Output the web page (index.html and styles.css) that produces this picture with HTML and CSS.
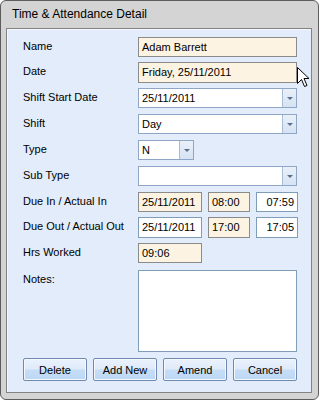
FILE: index.html
```html
<!DOCTYPE html>
<html lang="en">
<head>
  <meta charset="UTF-8" />
  <title>Time &amp; Attendance Detail</title>
  <link rel="stylesheet" href="styles.css">
</head>
<body>

  <div class="window">
    <div class="titlebar">Time &amp; Attendance Detail</div>

    <div class="client">
      <div class="row h20">
        <label>Name</label>
        <div class="box ro wide">Adam Barrett</div>
      </div>
      <div class="row h21">
        <label>Date</label>
        <div class="box ro wide">Friday, 25/11/2011</div>
      </div>
      <div class="row h21">
        <label>Shift Start Date</label>
        <div class="combo wide"><span>25/11/2011</span><i class="drop"></i></div>
      </div>
      <div class="row h21">
        <label>Shift</label>
        <div class="combo wide"><span>Day</span><i class="drop"></i></div>
      </div>
      <div class="row h21">
        <label>Type</label>
        <div class="combo small"><span>N</span><i class="drop"></i></div>
      </div>
      <div class="row h21">
        <label>Sub Type</label>
        <div class="combo wide"><span></span><i class="drop"></i></div>
      </div>
      <div class="row h20">
        <label>Due In / Actual In</label>
        <div class="trio">
          <div class="box ro date">25/11/2011</div>
          <div class="box ro time">08:00</div>
          <div class="box time right">07:59</div>
        </div>
      </div>
      <div class="row h21">
        <label>Due Out / Actual Out</label>
        <div class="trio">
          <div class="box date">25/11/2011</div>
          <div class="box ro time">17:00</div>
          <div class="box time right">17:05</div>
        </div>
      </div>
      <div class="row h22">
        <label>Hrs Worked</label>
        <div class="box ro date hrs">09:06</div>
      </div>
      <div class="row notes">
        <label>Notes:</label>
        <div class="box memo wide"></div>
      </div>

      <div class="buttons">
        <button class="btn">Delete</button>
        <button class="btn">Add New</button>
        <button class="btn">Amend</button>
        <button class="btn">Cancel</button>
      </div>
    </div>
  </div>

  <!-- mouse pointer over the date field -->
  <svg class="cursor" width="13" height="21" viewBox="0 0 13 21">
    <path d="M0.5 0.5 L0.5 16.5 L4.5 12.5 L7.5 19.5 L10 18.5 L7 11.5 L12 11.5 Z" fill="#fff" stroke="#000" stroke-width="1" stroke-linejoin="miter"/>
  </svg>

</body>
</html>
```

FILE: styles.css
```css
body {
  margin: 0;
  width: 319px;
  height: 400px;
  background: #ffffff;
  font-family: 'Liberation Sans', Arial, sans-serif;
  font-size: 11px;
  color: #000;
  position: relative;
  overflow: hidden;
}

.window {
  box-sizing: border-box;
  width: 319px;
  height: 400px;
  border: 1px solid #5c5c5c;
  border-radius: 6px;
  background: #d4d4d4;
  padding: 0 6px 6px 5px;
  display: flex;
  flex-direction: column;
}

.titlebar {
  height: 27px;
  line-height: 27px;
  padding-left: 6px;
  font-size: 12px;
  color: #000;
}

.client {
  flex: 1;
  border: 1px solid #838383;
  background: #e2ecfa;
  box-shadow: inset 1px 1px 0 #f4f8fd;
  padding: 8px 13px 0 16px;
  display: flex;
  flex-direction: column;
  gap: 5px;
}

.row {
  display: flex;
  align-items: flex-start;
}

.row label {
  width: 115px;
  line-height: 18px;
  flex-shrink: 0;
}

.h20 { height: 20px; }
.h21 { height: 21px; }
.h22 { height: 22px; }

.box {
  box-sizing: border-box;
  height: 20px;
  border: 1px solid #7f9db9;
  background: #fff;
  padding: 0 3px;
  line-height: 18px;
  white-space: nowrap;
}

.h21 .box { height: 21px; line-height: 19px; }

.box.ro {
  background: #fcf3e3;
  border-color: #8b8b8b;
}

.wide { width: 159px; }

.combo {
  box-sizing: border-box;
  height: 20px;
  border: 1px solid #8fa6c6;
  background: #fff;
  display: flex;
}

.combo span {
  flex: 1;
  padding: 0 3px;
  line-height: 18px;
}

.combo.small { width: 56px; }

.drop {
  width: 13px;
  border-left: 1px solid #a9bcd6;
  background: linear-gradient(#e9f0f9, #d6e3f3);
  position: relative;
}

.drop::after {
  content: "";
  position: absolute;
  left: 4px;
  top: 8px;
  border-left: 3px solid transparent;
  border-right: 3px solid transparent;
  border-top: 3px solid #5a6f8c;
}

.trio {
  display: flex;
  gap: 6px;
}

.date { width: 64px; }
.time { width: 42px; }
.box.right { text-align: right; }

.notes { height: 82px; }

.memo {
  height: 82px;
  border-color: #7f9db9;
}

.buttons {
  margin-top: 1px;
  display: flex;
  gap: 6px;
}

.btn {
  box-sizing: border-box;
  width: 64px;
  height: 23px;
  padding: 0;
  border: 1px solid #7089b0;
  border-radius: 2px;
  background: linear-gradient(#eaf2fc 0%, #dfeafa 48%, #c6ddf6 52%, #bcd7f5 100%);
  box-shadow: inset 0 0 0 1px #f5f9fe;
  font-family: 'Liberation Sans', Arial, sans-serif;
  font-size: 11px;
  color: #000;
}

.cursor {
  position: absolute;
  left: 297px;
  top: 67px;
}
```
